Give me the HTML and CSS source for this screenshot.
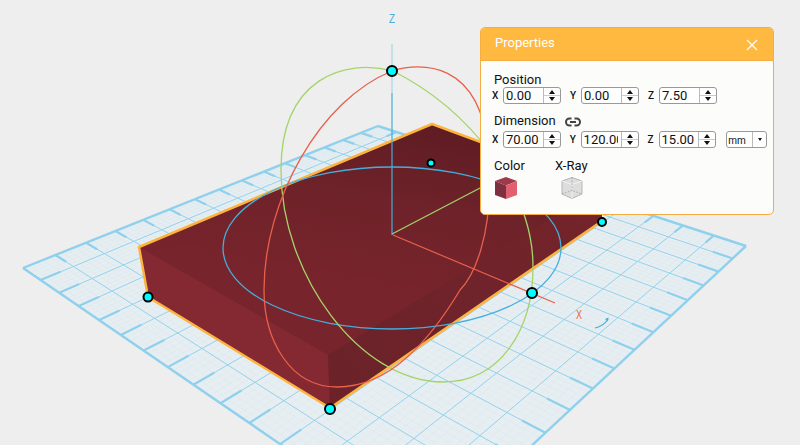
FILE: index.html
```html
<!DOCTYPE html>
<html lang="en">
<head>
    <meta charset="UTF-8">
    <title>Properties</title>
    <link rel="stylesheet" href="styles.css">
</head>
<body>
    <div class="viewport">
        <svg class="scene" width="800" height="445" viewBox="0 0 800 445">
            <defs>
                <linearGradient id="topFace" x1="432" y1="124" x2="400" y2="300" gradientUnits="userSpaceOnUse">
                    <stop offset="0" stop-color="#5f1c23"/>
                    <stop offset="0.45" stop-color="#6e2229"/>
                    <stop offset="1" stop-color="#78242c"/>
                </linearGradient>
                <linearGradient id="rightFace" x1="330" y1="380" x2="600" y2="200" gradientUnits="userSpaceOnUse">
                    <stop offset="0" stop-color="#6b2229"/>
                    <stop offset="1" stop-color="#74242b"/>
                </linearGradient>
            </defs>
            <g id="grid"></g>

            <polygon points="139,247 432,124 602,187 602,221 330,408 148,297" fill="#78242c"/>
            <polygon points="139,247 432,124 602,187 328,355" fill="url(#topFace)"/>
            <polygon points="139,247 328,355 330,408 148,297" fill="#842931"/>
            <polygon points="328,355 602,187 602,221 330,408" fill="url(#rightFace)"/>
            <polyline points="602,221 330,408 148,297 139,247 432,124 602,187" class="outline"/>

            <line x1="392" y1="44" x2="392" y2="93" class="axis-z-light"/>
            <line x1="392" y1="93" x2="392" y2="235" class="axis-z"/>
            <line x1="393" y1="235" x2="555" y2="303" class="axis-x"/>
            <line x1="392" y1="234" x2="482" y2="187" class="axis-y"/>

            <ellipse cx="392" cy="248" rx="169" ry="81" class="ring-blue"/>
            <path d="M393 71 C345 58 281 78 281 170 C281 275 360 382 443 382 C500 382 533 330 533 267 C533 190 470 110 393 71 Z" class="ring-green"/>
            <path d="M392 71 C420 62 480 60 488 150 C496 240 470 280 460 290 C430 340 390 387 337 387 C290 387 264 340 264 290 C264 200 320 100 392 71 Z" class="ring-red"/>

            <circle cx="392" cy="71" r="5" class="handle"/>
            <circle cx="148" cy="297" r="4.5" class="handle"/>
            <circle cx="330" cy="409" r="5" class="handle"/>
            <circle cx="532" cy="293" r="5" class="handle"/>
            <circle cx="602" cy="222" r="4" class="handle"/>
            <circle cx="431" cy="163" r="3.5" class="handle"/>

            <text x="392" y="23" class="label label-z" textLength="6" lengthAdjust="spacingAndGlyphs">Z</text>
            <text x="579" y="319" class="label label-x" textLength="6" lengthAdjust="spacingAndGlyphs">X</text>
            <path d="M595 328 C600 327 605 324 608 319" class="rotate-arrow"/>
            <path d="M605 319 L608.500 317.500 L608 321.500 Z" fill="#4aaed8"/>
        </svg>

        <section class="panel">
            <header class="panel_head">
                <span>Properties</span>
                <svg class="panel_close" width="12" height="12" viewBox="0 0 12 12"><path d="M1 1 L11 11 M11 1 L1 11"/></svg>
            </header>
            <div class="panel_body">
                <div class="field-label">Position</div>
                <div class="field-row">
                    <label class="axis-name">X</label>
                    <div class="num"><span class="num_value">0.00</span><div class="num_spin"><i class="up"></i><i class="down"></i></div></div>
                    <label class="axis-name">Y</label>
                    <div class="num"><span class="num_value">0.00</span><div class="num_spin"><i class="up"></i><i class="down"></i></div></div>
                    <label class="axis-name">Z</label>
                    <div class="num"><span class="num_value">7.50</span><div class="num_spin"><i class="up"></i><i class="down"></i></div></div>
                </div>

                <div class="field-label field-label-dim">
                    Dimension
                    <svg class="link-icon" width="16" height="10" viewBox="0 0 16 10"><path d="M6.500 1.500 H4.500 A3.500 3.500 0 0 0 4.500 8.500 H6.500 M9.500 1.500 H11.500 A3.500 3.500 0 0 1 11.500 8.500 H9.500 M5 5 H11"/></svg>
                </div>
                <div class="field-row">
                    <label class="axis-name">X</label>
                    <div class="num"><span class="num_value">70.00</span><div class="num_spin"><i class="up"></i><i class="down"></i></div></div>
                    <label class="axis-name">Y</label>
                    <div class="num"><span class="num_value">120.00</span><div class="num_spin"><i class="up"></i><i class="down"></i></div></div>
                    <label class="axis-name">Z</label>
                    <div class="num"><span class="num_value">15.00</span><div class="num_spin"><i class="up"></i><i class="down"></i></div></div>
                    <div class="unit"><span class="unit_value">mm</span><div class="unit_arrow"><i class="down"></i></div></div>
                </div>

                <div class="swatches">
                    <div class="swatch">
                        <div class="swatch_label">Color</div>
                        <svg class="swatch_icon" width="22" height="22" viewBox="1 1 22 22">
                            <polygon points="12,1 23,5 12,9.500 1,5" fill="#a03a4a"/>
                            <polygon points="1,5 12,9.500 12,23 1,19" fill="#7f3040"/>
                            <polygon points="12,9.500 23,5 23,19 12,23" fill="#e1606f"/>
                        </svg>
                    </div>
                    <div class="swatch swatch-xray">
                        <div class="swatch_label">X-Ray</div>
                        <svg class="swatch_icon" width="22" height="22" viewBox="1 1 22 22">
                            <polygon points="12,1.500 22,5 22,18 12,22.500 2,18 2,5" fill="#dddddd" stroke="#b5b5b5"/>
                            <path d="M2 5 L12 8.500 L22 5 M12 8.500 V22.500" fill="none" stroke="#f2f2f2"/>
                            <path d="M12 1.500 V14.500 M2 18 L12 14.500 L22 18" fill="none" stroke="#999" stroke-dasharray="1.500 1.500" stroke-width="0.800"/>
                        </svg>
                    </div>
                </div>
            </div>
        </section>
    </div>
    <script src="script.js"></script>
</body>
</html>
```

FILE: styles.css
```css
body {
    margin: 0;
    background-color: #eeeeee;
    font-family: Roboto, "Liberation Sans", sans-serif;
    font-size: 13px;
    color: #111;
}
.viewport {
    position: relative;
    width: 800px;
    height: 445px;
    overflow: hidden;
}
.scene {
    position: absolute;
    left: 0;
    top: 0;
}
.outline {
    fill: none;
    stroke: #fdb33e;
    stroke-width: 2.5;
    stroke-linejoin: round;
}
.axis-z-light {
    stroke: #a9d5e6;
    stroke-width: 1.2;
}
.axis-z {
    stroke: #45aedc;
    stroke-width: 1.2;
}
.axis-x {
    stroke: #e8604c;
    stroke-width: 1.2;
}
.axis-y {
    stroke: #a5d46a;
    stroke-width: 1.2;
}
.ring-blue,
.ring-green,
.ring-red {
    fill: none;
    stroke-width: 1.3;
}
.ring-blue {
    stroke: #45aedc;
}
.ring-green {
    stroke: #a5d46a;
}
.ring-red {
    stroke: #e8604c;
}
.handle {
    fill: #00ffff;
    stroke: #000;
    stroke-width: 2;
}
.label {
    font-family: "Liberation Sans", sans-serif;
    font-size: 13px;
    text-anchor: middle;
}
.label-z {
    fill: #4aaed8;
}
.label-x {
    fill: #e8604c;
}
.rotate-arrow {
    fill: none;
    stroke: #4aaed8;
    stroke-width: 1.2;
}

.panel {
    position: absolute;
    left: 480px;
    top: 27px;
    width: 292px;
    height: 186px;
    background-color: #fcfcfa;
    border: 1px solid #f5ac40;
    border-radius: 5px;
    overflow: hidden;
}
.panel_head {
    display: flex;
    align-items: center;
    justify-content: space-between;
    height: 33px;
    padding: 0 15px 4px 14px;
    box-sizing: border-box;
    background-color: #ffb940;
    border-bottom: 1px solid #f5ac40;
    color: #fff;
    font-size: 13px;
}
.panel_close {
    margin-top: 5px;
}
.panel_close path {
    fill: none;
    stroke: #fff;
    stroke-width: 1.2;
}
.panel_body {
    padding: 10px 6px 0 10px;
}
.field-label {
    height: 16px;
    line-height: 18px;
    padding-left: 3px;
}
.field-label-dim {
    display: flex;
    align-items: center;
    gap: 9px;
    margin-top: 9px;
    margin-bottom: 2px;
}
.link-icon {
    margin-top: 2px;
}
.link-icon path {
    fill: none;
    stroke: #444;
    stroke-width: 2;
}
.field-row {
    display: flex;
    align-items: center;
}
.axis-name {
    width: 11px;
    padding-left: 1px;
    font-size: 10px;
    font-weight: 500;
}
.axis-name + .num {
    margin-right: 8px;
}
.num {
    display: flex;
    width: 58px;
    height: 17px;
    box-sizing: border-box;
    border: 1px solid #999;
    border-radius: 3px;
    background-color: #fff;
}
.num_value {
    flex: 1;
    min-width: 0;
    margin: 0 3px 0 2px;
    overflow: hidden;
    white-space: nowrap;
    font-size: 13px;
    line-height: 15px;
}
.num_spin {
    display: flex;
    flex-direction: column;
    align-items: center;
    justify-content: center;
    gap: 3px;
    width: 16px;
    flex-shrink: 0;
    border-left: 1px solid #bbb;
    background: linear-gradient(#ccc, #ccc) center / 100% 1px no-repeat;
}
.up,
.down {
    display: block;
    width: 0;
    height: 0;
    border-left: 3.5px solid transparent;
    border-right: 3.5px solid transparent;
}
.up {
    border-bottom: 4px solid #111;
}
.down {
    border-top: 4px solid #111;
}
.unit {
    display: flex;
    width: 41px;
    height: 17px;
    margin-left: 2px;
    box-sizing: border-box;
    border: 1px solid #999;
    border-radius: 3px;
    background-color: #fff;
}
.unit_value {
    flex: 1;
    padding-left: 1px;
    font-size: 10px;
    line-height: 17px;
}
.unit_arrow {
    display: flex;
    align-items: center;
    justify-content: center;
    width: 13px;
    border-left: 1px solid #bbb;
}
.unit_arrow .down {
    border-left-width: 2.5px;
    border-right-width: 2.5px;
    border-top-width: 3px;
}
.swatches {
    display: flex;
    margin-top: 9px;
    padding-left: 3px;
}
.swatch {
    width: 61px;
}
.swatch_label {
    height: 20px;
    line-height: 18px;
}
.swatch_icon {
    display: block;
    margin-left: 1px;
}
.swatch-xray .swatch_icon {
    margin-left: 6px;
}
```

FILE: script.js
```js
// plate grid: lines go through a homography from the unit square to the plate corners
const corners = [[23, 268], [378, 126], [746, 246], [426, 544]];
const cells = 15;
const fine = 5;

const [[x0, y0], [x1, y1], [x2, y2], [x3, y3]] = corners;
const dx1 = x1 - x2, dx2 = x3 - x2, dx3 = x0 - x1 + x2 - x3;
const dy1 = y1 - y2, dy2 = y3 - y2, dy3 = y0 - y1 + y2 - y3;
const den = dx1 * dy2 - dx2 * dy1;
const g = (dx3 * dy2 - dx2 * dy3) / den;
const h = (dx1 * dy3 - dx3 * dy1) / den;
const a = x1 - x0 + g * x1, b = x3 - x0 + h * x3;
const d = y1 - y0 + g * y1, e = y3 - y0 + h * y3;

function project(u, v) {
    const w = g * u + h * v + 1;
    return [(a * u + b * v + x0) / w, (d * u + e * v + y0) / w];
}

const gridEl = document.getElementById('grid');

function addLine(u1, v1, u2, v2, color, width) {
    const p = project(u1, v1);
    const q = project(u2, v2);
    const line = document.createElementNS('http://www.w3.org/2000/svg', 'line');
    line.setAttribute('x1', p[0].toFixed(1));
    line.setAttribute('y1', p[1].toFixed(1));
    line.setAttribute('x2', q[0].toFixed(1));
    line.setAttribute('y2', q[1].toFixed(1));
    line.setAttribute('stroke', color);
    line.setAttribute('stroke-width', width);
    gridEl.appendChild(line);
}

const plate = document.createElementNS('http://www.w3.org/2000/svg', 'polygon');
plate.setAttribute('points', corners.map(c => c.join(',')).join(' '));
plate.setAttribute('fill', '#e6eef2');
gridEl.appendChild(plate);

for (let i = 1; i < cells * fine; i++) {
    if (i % fine === 0) continue;
    const t = i / (cells * fine);
    addLine(t, 0, t, 1, '#d8e5ec', 0.4);
    addLine(0, t, 1, t, '#d8e5ec', 0.4);
}
for (let i = 1; i < cells; i++) {
    const t = i / cells;
    addLine(t, 0, t, 1, '#93d2ec', 1);
    addLine(0, t, 1, t, '#93d2ec', 1);
    // heavier stubs where the lines meet the plate edge
    const stub = 0.6 / cells;
    addLine(0, t, stub, t, '#8fd0ec', 2.2);
    addLine(1 - stub, t, 1, t, '#8fd0ec', 2.2);
    addLine(t, 0, t, stub, '#8fd0ec', 2.2);
    addLine(t, 1 - stub, t, 1, '#8fd0ec', 2.2);
}
addLine(0, 0, 1, 0, '#8fd0ec', 2.4);
addLine(1, 0, 1, 1, '#8fd0ec', 2.4);
addLine(1, 1, 0, 1, '#8fd0ec', 2.4);
addLine(0, 1, 0, 0, '#8fd0ec', 2.4);
```
